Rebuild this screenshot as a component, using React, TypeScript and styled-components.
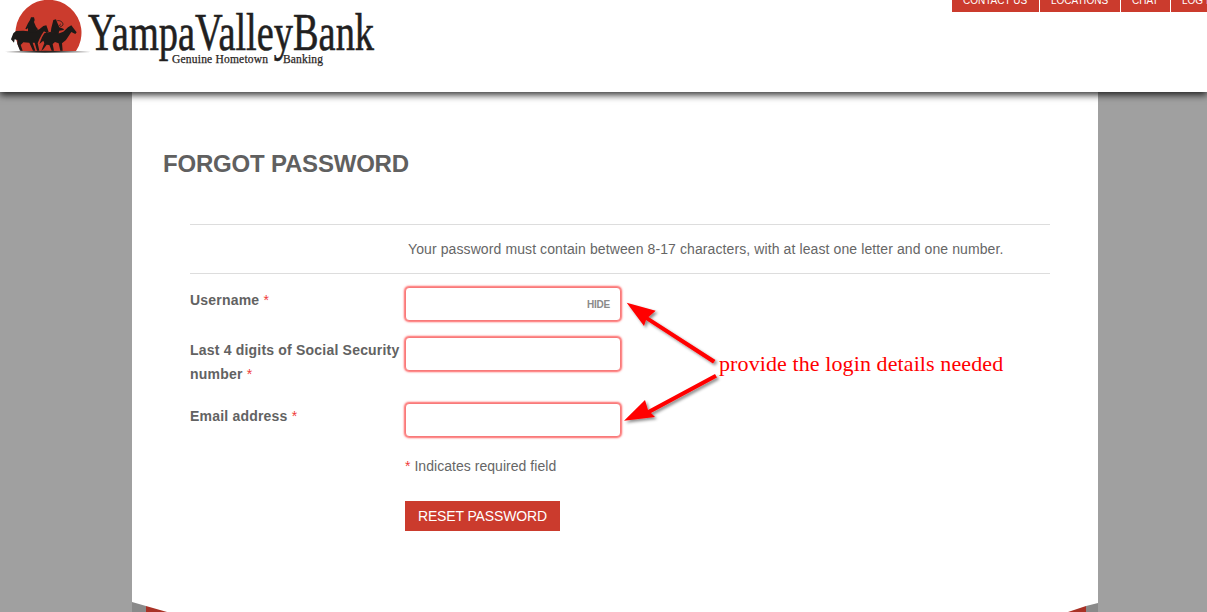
import React from "react";
import styled, { createGlobalStyle } from "styled-components";

const Global = createGlobalStyle`
  html, body { margin: 0; padding: 0; height: 612px; overflow: hidden; background: #a0a0a0; }
  body { font-family: "Liberation Sans", Arial, sans-serif; color: #5f5f5f; }
  * { box-sizing: border-box; }
`;

const Page = styled.div`
  position: relative;
  width: 1207px;
  height: 612px;
  overflow: hidden;
`;

const Header = styled.header`
  position: relative;
  z-index: 2;
  height: 92px;
  background: #fff;
  display: flex;
  justify-content: space-between;
  align-items: flex-start;
  box-shadow: 0 3px 7px rgba(0, 0, 0, 0.8);
`;

const Nav = styled.nav`
  display: flex;
  gap: 1px;
  width: 255px;
  flex: none;
`;

const NavItem = styled.a<{ $w: number }>`
  flex: none;
  width: ${(p) => p.$w}px;
  height: 12px;
  background: #cb3b2d;
  color: #fff;
  font-size: 10px;
  line-height: 2px;
  padding-left: 11px;
  white-space: nowrap;
  overflow: hidden;
`;

const Card = styled.main`
  position: relative;
  width: 966px;
  height: 520px;
  margin-left: 132px;
  background: #fff;
  padding-top: 58px;
`;

const Title = styled.h1`
  margin: 0 0 46px 31px;
  font-size: 24px;
  line-height: 28px;
  font-weight: 700;
  color: #606060;
  letter-spacing: -0.2px;
`;

const Section = styled.section`
  margin: 0 48px 0 58px;
`;

const Info = styled.p`
  margin: 0;
  height: 50px;
  border-top: 1px solid #ddd;
  border-bottom: 1px solid #ddd;
  padding-left: 218px;
  font-size: 14px;
  line-height: 48px;
  letter-spacing: 0.1px;
  color: #666;
`;

const Fields = styled.div`
  display: grid;
  grid-template-columns: 215px 216px;
  row-gap: 16px;
  padding-top: 13px;
`;

const Label = styled.label`
  font-size: 14px;
  font-weight: 700;
  line-height: 24px;
  padding: 1px 0;
  letter-spacing: 0.2px;
  color: #626262;
`;

const Star = styled.span`
  color: #f03a3a;
  font-weight: 400;
`;

const InputWrap = styled.div`
  position: relative;
  height: 34px;
`;

const Input = styled.input`
  display: block;
  width: 216px;
  height: 34px;
  border: 1px solid #f77a7a;
  border-radius: 4px;
  background: #fff;
  outline: none;
  box-shadow: 0 0 2px 1px rgba(255, 70, 70, 0.85);
`;

const Hide = styled.span`
  position: absolute;
  right: 11px;
  top: 11px;
  font-size: 10px;
  line-height: 13px;
  font-weight: 700;
  letter-spacing: -0.2px;
  color: #8a8a8a;
`;

const Foot = styled.div`
  padding: 19px 0 0 215px;
`;

const Note = styled.p`
  margin: 0 0 25px;
  font-size: 14px;
  line-height: 20px;
  letter-spacing: 0.04px;
  color: #666;
`;

const Reset = styled.button`
  display: block;
  width: 155px;
  height: 30px;
  border: 0;
  padding: 0;
  background: #cb3b2d;
  color: #fff;
  font-family: inherit;
  font-size: 14px;
  letter-spacing: -0.13px;
`;

const Fold = styled.svg<{ $side: "left" | "right" }>`
  position: absolute;
  bottom: 0;
  ${(p) => (p.$side === "left" ? "left: 0;" : "right: 0;")}
  display: block;
`;

const Overlay = styled.svg`
  position: absolute;
  left: 610px;
  top: 290px;
  z-index: 3;
  overflow: visible;
`;

const Callout = styled.div`
  position: absolute;
  left: 719px;
  top: 350px;
  z-index: 3;
  font-family: "Liberation Serif", "Times New Roman", serif;
  font-size: 22px;
  line-height: 28px;
  letter-spacing: 0.1px;
  color: #ff0000;
  white-space: nowrap;
`;

const Logo = () => (
  <svg width="380" height="70" viewBox="0 0 380 70" style={{ display: "block", flex: "none" }}>
    <path d="M21 51 A33 33 0 1 1 76 51 Z" fill="#cb3b2d" />
    <path d="M5 52 L45 50.8 L91 52 L45 52.7 Z" fill="#2a2624" />
    <g fill="#1d1a18" transform="scale(0.3333)">
      <path d="M33 118 L40 100 L48 93 L70 92 L100 95 L118 88 L130 78 L139 76 L142 84 L146 96 L140 99 L132 94 L125 104 L118 118 L113 130 L118 152 L111 152 L104 128 L98 128 L106 152 L99 152 L88 128 L70 127 L62 135 L68 152 L60 152 L52 132 L52 120 L44 118 L42 128 Z" />
      <path d="M90 60 L93 52 L102 52 L104 60 L102 66 L108 80 L114 88 L110 92 L108 98 L84 96 L84 84 L80 88 L76 86 L84 70 Z" />
      <path d="M118 132 L126 112 L133 100 L150 96 L178 100 L190 95 L204 82 L214 76 L220 84 L230 97 L226 102 L214 96 L206 108 L198 120 L186 130 L188 152 L181 152 L176 130 L165 126 L158 132 L162 152 L155 152 L148 135 L140 134 L130 148 L124 152 L133 130 L130 122 Z" />
      <path d="M158 68 L160 60 L168 58 L171 66 L178 82 L190 86 L192 90 L178 92 L176 100 L152 98 L154 84 Z" />
      <path d="M172 62 C184 60 194 72 186 78 C180 82 176 76 182 72" fill="none" stroke="#1d1a18" strokeWidth="2.5" />
    </g>
    <text x="88" y="50" fontFamily="'Liberation Serif', serif" fontSize="52" fill="#221f1f" stroke="#221f1f" strokeWidth="0.6" textLength="286" lengthAdjust="spacingAndGlyphs">YampaValleyBank</text>
    <text x="172" y="63" fontFamily="'Liberation Serif', serif" fontSize="11.5" fill="#2a2624" stroke="#2a2624" strokeWidth="0.25" textLength="96" lengthAdjust="spacing">Genuine Hometown</text>
    <text x="283" y="63" fontFamily="'Liberation Serif', serif" fontSize="11.5" fill="#2a2624" stroke="#2a2624" strokeWidth="0.25" textLength="40" lengthAdjust="spacing">Banking</text>
  </svg>
);

export default function App() {
  return (
    <Page>
      <Global />
      <Header>
        <Logo />
        <Nav>
          <NavItem $w={87}>CONTACT US</NavItem>
          <NavItem $w={80}>LOCATIONS</NavItem>
          <NavItem $w={49}>CHAT</NavItem>
          <NavItem $w={36}>LOG IN</NavItem>
        </Nav>
      </Header>
      <Card>
        <Title>FORGOT PASSWORD</Title>
        <Section>
          <Info>Your password must contain between 8-17 characters, with at least one letter and one number.</Info>
          <Fields>
            <Label>Username <Star>*</Star></Label>
            <InputWrap>
              <Input />
              <Hide>HIDE</Hide>
            </InputWrap>
            <Label>Last 4 digits of Social Security number <Star>*</Star></Label>
            <InputWrap>
              <Input />
            </InputWrap>
            <Label>Email address <Star>*</Star></Label>
            <InputWrap>
              <Input />
            </InputWrap>
          </Fields>
          <Foot>
            <Note><Star>*</Star> Indicates required field</Note>
            <Reset>RESET PASSWORD</Reset>
          </Foot>
        </Section>
        <Fold $side="left" width="35" height="10" viewBox="0 0 35 10">
          <polygon points="0,0 14,4 14,10 0,10" fill="#8a8a8a" />
          <polygon points="14,4 35,10 14,10" fill="#a93226" />
        </Fold>
        <Fold $side="right" width="30" height="10" viewBox="0 0 30 10">
          <polygon points="30,1 18,4 18,10 30,10" fill="#8a8a8a" />
          <polygon points="18,4 0,10 18,10" fill="#a93226" />
        </Fold>
      </Card>
      <Overlay width="110" height="140" viewBox="0 0 110 140">
        <defs>
          <filter id="sh" x="-20%" y="-20%" width="140%" height="140%">
            <feDropShadow dx="2" dy="2" stdDeviation="1.5" floodColor="#000" floodOpacity="0.45" />
          </filter>
        </defs>
        <g fill="#ff0000" filter="url(#sh)">
          <polygon points="16.7,12.7 45.7,20.7 38.5,27 105.5,70 103,73.5 36,30 34,36" />
          <polygon points="14,130.7 35,110 38,120 105,84 107,87.5 41,123 45,127" />
        </g>
      </Overlay>
      <Callout>provide the login details needed</Callout>
    </Page>
  );
}
